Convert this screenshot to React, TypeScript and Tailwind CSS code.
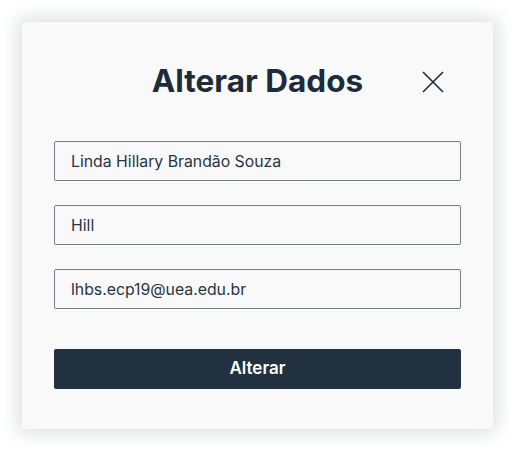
import { useState } from "react";

function CloseIcon() {
  return (
    <svg width="22" height="22" viewBox="0 0 22 22" fill="none">
      <path d="M1 1L21 21M21 1L1 21" stroke="#1e2b3a" strokeWidth="1.6" />
    </svg>
  );
}

export default function App() {
  const [nome, setNome] = useState("Linda Hillary Brandão Souza");
  const [apelido, setApelido] = useState("Hill");
  const [email, setEmail] = useState("lhbs.ecp19@uea.edu.br");

  const inputClass =
    "h-10 w-full rounded-[2px] border border-[#737d8c] bg-[#f9f9f9] px-4 text-[15.8px] text-[#283445] outline-none";

  return (
    <div
      className="min-h-[451px] bg-white pl-[22px] pt-[22px]"
      style={{ fontFamily: "Inter, 'Noto Sans', sans-serif" }}
    >
      <div className="h-[407px] w-[471px] rounded-[4px] bg-[#f9f9f9] px-8 pt-[41px] shadow-[0_0_18px_4px_rgba(70,120,100,0.22)]">
        <div className="relative flex h-9 items-center justify-center">
          <h1 className="text-[31.5px] font-bold leading-9 text-[#1e2b3a]">Alterar Dados</h1>
          <button className="absolute right-[17px] top-[8px]">
            <CloseIcon />
          </button>
        </div>

        <form className="mt-[42px] flex flex-col gap-6" onSubmit={(e) => e.preventDefault()}>
          <input className={inputClass} value={nome} onChange={(e) => setNome(e.target.value)} />
          <input className={inputClass} value={apelido} onChange={(e) => setApelido(e.target.value)} />
          <input className={inputClass} value={email} onChange={(e) => setEmail(e.target.value)} />

          <button
            type="submit"
            className="mt-4 h-10 w-full rounded-[2px] bg-[#223140] text-[17px] font-semibold text-white"
          >
            Alterar
          </button>
        </form>
      </div>
    </div>
  );
}
